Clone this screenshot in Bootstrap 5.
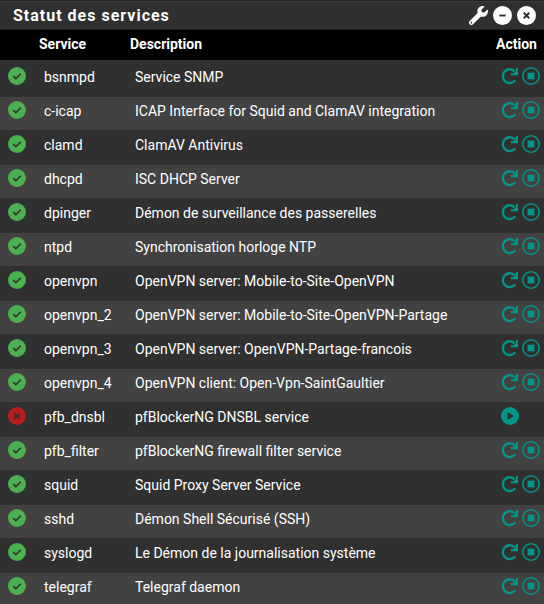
<!DOCTYPE html>
<html lang="fr" data-bs-theme="dark">
<head>
<meta charset="utf-8">
<meta name="viewport" content="width=device-width, initial-scale=1">
<title>Statut des services</title>
<link rel="stylesheet" href="https://cdn.jsdelivr.net/npm/bootstrap@5.3.0/dist/css/bootstrap.min.css">
<style>
body { background: #303030; color: #fff; font: 14px/20px Roboto, sans-serif; }
.panel-title { border-top: 1px solid #212121; border-bottom: 1px solid #212121; height: 30px; padding: 0 8px 0 13px; box-shadow: inset 0 1px #3c3c3c; }
.panel-title h1 { font-size: 16px; line-height: 26px; padding-top: 2px; letter-spacing: 1px; }
.tools { gap: 5px; }
.tools .btn, .svc .btn { line-height: 0; color: #fff; --bs-btn-border-width: 0; }
.svc .btn { color: #009688; }
svg { display: block; fill: currentColor; }
.svc { --bs-table-bg: #303030; --bs-table-color: #fff; table-layout: fixed; }
.svc th { background: #000; padding: 4px 0 6px; height: 30px; border: 0; box-shadow: none; }
.svc tbody td { height: 34px; padding: 4px 0 9px 5px; border: 0; border-bottom: 1px solid #303030; }
.svc tbody tr:nth-child(even) { --bs-table-bg: #424242; }
.svc tbody tr:first-child td { height: 36px; padding: 7px 0 8px 5px; }
.svc tbody tr:last-child td { height: 32px; padding-bottom: 7px; }
.svc tbody tr td.state { padding-left: 8px; }
.svc tbody tr:first-child td.state { padding-left: 8px; }
.c-state { width: 39px; }
.c-name { width: 91px; }
.c-act { width: 48px; }
.ok { color: #4caf50; }
.ko { color: #b71c1c; }
.acts-row { gap: 3px; }
</style>
<script src="https://cdn.jsdelivr.net/npm/bootstrap@5.3.0/dist/js/bootstrap.bundle.min.js"></script>
</head>
<body>
<svg class="d-none" aria-hidden="true">
<symbol id="check" viewBox="0 0 18 18"><circle cx="9" cy="9" r="9"/><path d="M5.2 9.2 7.8 11.7 12.8 6.7" fill="none" stroke="#303030" stroke-width="1.6"/></symbol>
<symbol id="cross" viewBox="0 0 18 18"><circle cx="9" cy="9" r="9"/><path d="M6.4 6.4 11.6 11.6M11.6 6.4 6.4 11.6" fill="none" stroke="#303030" stroke-width="1.8"/></symbol>
<symbol id="minus" viewBox="0 0 18 18"><circle cx="9" cy="9" r="9"/><path d="M6 9h6" stroke="#303030" stroke-width="1.8"/></symbol>
<symbol id="play" viewBox="0 0 18 18"><circle cx="9" cy="9" r="9"/><path d="M6.5 5v8l6.5-4z" fill="#303030"/></symbol>
<symbol id="stop" viewBox="0 0 18 18"><circle cx="9" cy="9" r="8.2" fill="none" stroke="currentColor" stroke-width="1.6"/><path d="M5.6 5.6h6.8v6.8H5.6z"/></symbol>
<symbol id="redo" viewBox="0 0 18 18"><path d="M14.2 13.4A6.9 6.9 0 1 1 13.8 4.4" fill="none" stroke="currentColor" stroke-width="2.3"/><path d="M14.9 1H17v7.2h-7V6.1l3-.2 1.9-2z"/></symbol>
<symbol id="wrench" viewBox="0 0 512 512"><path d="M507.700 109.100c-2.200-9-13.500-12.100-20.100-5.500l-74.400 74.400-67.900-11.300L334 98.900l74.400-74.400c6.600-6.600 3.400-17.900-5.700-20.200-47.400-11.700-99.600.9-136.600 37.900-39.600 39.600-50.500 97.100-34.100 147.200L18.700 402.800c-25 25-25 65.500 0 90.500 25 25 65.500 25 90.500 0l213.200-213.200c50.100 16.700 107.500 5.700 147.400-34.200 37.100-37.100 49.700-89.300 37.900-136.800zM64 472c-13.200 0-24-10.800-24-24s10.800-24 24-24 24 10.700 24 24-10.800 24-24 24z"/></symbol>
</svg>
<main>
<header class="panel-title d-flex justify-content-between align-items-center">
<h1 class="fw-bold m-0">Statut des services</h1>
<div class="tools d-flex align-items-center">
<button type="button" class="btn p-0" aria-label="Configurer"><svg width="19" height="19"><use href="#wrench"/></svg></button>
<button type="button" class="btn p-0" aria-label="Réduire"><svg width="19" height="19"><use href="#minus"/></svg></button>
<button type="button" class="btn p-0" aria-label="Fermer"><svg width="19" height="19"><use href="#cross"/></svg></button>
</div>
</header>
<table class="table svc w-100 m-0">
<colgroup><col class="c-state"><col class="c-name"><col><col class="c-act"></colgroup>
<thead><tr><th></th><th scope="col">Service</th><th scope="col">Description</th><th scope="col">Action</th></tr></thead>
<tbody id="services"></tbody>
</table>
</main>
<script>
const services = [
["bsnmpd", "Service SNMP"],
["c-icap", "ICAP Interface for Squid and ClamAV integration"],
["clamd", "ClamAV Antivirus"],
["dhcpd", "ISC DHCP Server"],
["dpinger", "Démon de surveillance des passerelles"],
["ntpd", "Synchronisation horloge NTP"],
["openvpn", "OpenVPN server: Mobile-to-Site-OpenVPN"],
["openvpn_2", "OpenVPN server: Mobile-to-Site-OpenVPN-Partage"],
["openvpn_3", "OpenVPN server: OpenVPN-Partage-francois"],
["openvpn_4", "OpenVPN client: Open-Vpn-SaintGaultier"],
["pfb_dnsbl", "pfBlockerNG DNSBL service", true],
["pfb_filter", "pfBlockerNG firewall filter service"],
["squid", "Squid Proxy Server Service"],
["sshd", "Démon Shell Sécurisé (SSH)"],
["syslogd", "Le Démon de la journalisation système"],
["telegraf", "Telegraf daemon"]
];
const icon = id => `<svg width="18" height="18" aria-hidden="true"><use href="#${id}"/></svg>`;
const button = (id, label) => `<button type="button" class="btn p-0" aria-label="${label}">${icon(id)}</button>`;
document.getElementById("services").innerHTML = services.map(([name, text, down]) => `<tr>
<td class="state ${down ? "ko" : "ok"}">${icon(down ? "cross" : "check")}</td>
<td>${name}</td><td>${text}</td>
<td class="acts"><div class="acts-row d-flex">${down ? button("play", "Démarrer " + name) : button("redo", "Redémarrer " + name) + button("stop", "Arrêter " + name)}</div></td></tr>`).join("");
</script>
</body>
</html>
